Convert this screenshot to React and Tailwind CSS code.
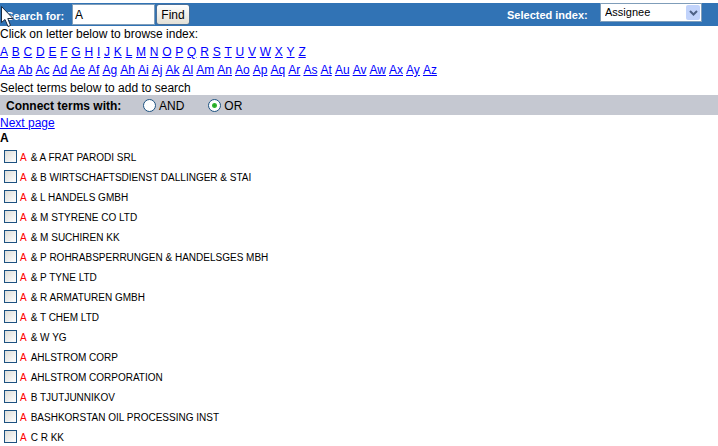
import { useState } from "react";

const LETTERS = "ABCDEFGHIJKLMNOPQRSTUVWXYZ".split("");
const PREFIXES = "abcdefghijklmnopqrstuvwxyz".split("").map((c) => "A" + c);

const TERMS = [
  "& A FRAT PARODI SRL",
  "& B WIRTSCHAFTSDIENST DALLINGER & STAI",
  "& L HANDELS GMBH",
  "& M STYRENE CO LTD",
  "& M SUCHIREN KK",
  "& P ROHRABSPERRUNGEN & HANDELSGES MBH",
  "& P TYNE LTD",
  "& R ARMATUREN GMBH",
  "& T CHEM LTD",
  "& W YG",
  "AHLSTROM CORP",
  "AHLSTROM CORPORATION",
  "B TJUTJUNNIKOV",
  "BASHKORSTAN OIL PROCESSING INST",
  "C R KK",
];

function IndexLinks({ label, items, width }) {
  return (
    <nav aria-label={label} className={"flex h-[18px] justify-between leading-[18px] " + width}>
      {items.map((item) => (
        <a key={item} href={"#" + item} className="text-[#0000ff] underline">
          {item}
        </a>
      ))}
    </nav>
  );
}

function Radio({ value, checked, onChange }) {
  return (
    <label className="flex items-center gap-[3px]">
      <input
        type="radio"
        name="operator"
        value={value}
        checked={checked}
        onChange={onChange}
        className="mb-px size-[13px] appearance-none rounded-full border border-[#1c5180] bg-white checked:bg-[radial-gradient(circle,#21a121_0,#35b835_2px,#ffffff_3px)]"
      />
      {value}
    </label>
  );
}

export default function App() {
  const [query, setQuery] = useState("A");
  const [operator, setOperator] = useState("OR");

  return (
    <div className="bg-white pt-[3px] font-['Liberation_Sans',Arial,sans-serif] text-[12px] text-black">
      <svg
        className="pointer-events-none absolute top-[5px] left-0"
        width="14"
        height="23"
        viewBox="0 0 14 23"
        aria-hidden="true"
      >
        <path
          d="M1.5 1.5V17.5L5 14.5L8 21.5L10.5 20.5L7.8 13.5H13Z"
          fill="#fff"
          stroke="#1a2a40"
        />
      </svg>
      <form
        className="flex h-[23px] items-center justify-between bg-[#3173b5] pr-4 pl-[6px] text-[11px]"
        onSubmit={(e) => e.preventDefault()}
      >
        <div className="flex items-center">
          <label htmlFor="query" className="w-[66px] pt-1 font-bold text-white">
            Search for:
          </label>
          <input
            id="query"
            value={query}
            onChange={(e) => setQuery(e.target.value)}
            className="h-[21px] w-[83px] border border-[#7f9db9] bg-white px-[2px] text-[12px] outline-none"
          />
          <button
            type="submit"
            className="ml-px h-[21px] w-[34px] rounded-[3px] border border-[#4a6f98] bg-linear-to-b from-white to-[#e3e0d6] text-[12px] leading-[18px]"
          >
            Find
          </button>
        </div>
        <div className="flex items-center">
          <label htmlFor="index" className="w-[93px] pt-[2px] font-bold text-white">
            Selected index:
          </label>
          <div className="relative mb-1">
            <select
              id="index"
              className="block h-[19px] w-[102px] appearance-none border border-[#7f9db9] bg-white px-1 text-[11px] outline-none"
            >
              <option>Assignee</option>
            </select>
            <span className="pointer-events-none absolute top-[2px] right-[2px] flex h-[15px] w-[14px] items-center justify-center rounded-[2px] bg-[#c1d3fb]">
              <svg width="9" height="6" viewBox="0 0 9 6" aria-hidden="true">
                <path d="M1 1L4.5 4.5L8 1" fill="none" stroke="#4d6185" strokeWidth="2" />
              </svg>
            </span>
          </div>
        </div>
      </form>

      <p className="h-[17px] leading-4">Click on letter below to browse index:</p>
      <IndexLinks label="Letters" items={LETTERS} width="w-[306px]" />
      <IndexLinks label="Prefixes" items={PREFIXES} width="w-[437px]" />
      <p className="h-4 leading-[18px]">Select terms below to add to search</p>

      <fieldset className="flex h-5 items-center bg-[#c5c8d1] pt-px pl-[6px]">
        <span className="w-[137px] font-bold">Connect terms with:</span>
        <div className="flex gap-6">
          <Radio value="AND" checked={operator === "AND"} onChange={() => setOperator("AND")} />
          <Radio value="OR" checked={operator === "OR"} onChange={() => setOperator("OR")} />
        </div>
      </fieldset>

      <a href="#next" className="block h-4 w-fit leading-4 text-[#0000ff] underline">
        Next page
      </a>
      <h2 className="h-4 leading-[14px] font-bold">A</h2>
      <ul className="text-[10px]">
        {TERMS.map((term) => (
          <li key={term} className="h-5">
            <label className="flex w-fit items-center pl-1 leading-[21px]">
              <input
                type="checkbox"
                className="mr-[3px] mb-[3px] size-[13px] appearance-none border border-[#1c5180] bg-linear-to-br from-[#dcdcd7] to-white checked:bg-[#21a121] checked:bg-none"
              />
              <span className="flex gap-1">
                <span className="text-[#ff0000]">A</span>
                <span>{term}</span>
              </span>
            </label>
          </li>
        ))}
      </ul>
    </div>
  );
}
